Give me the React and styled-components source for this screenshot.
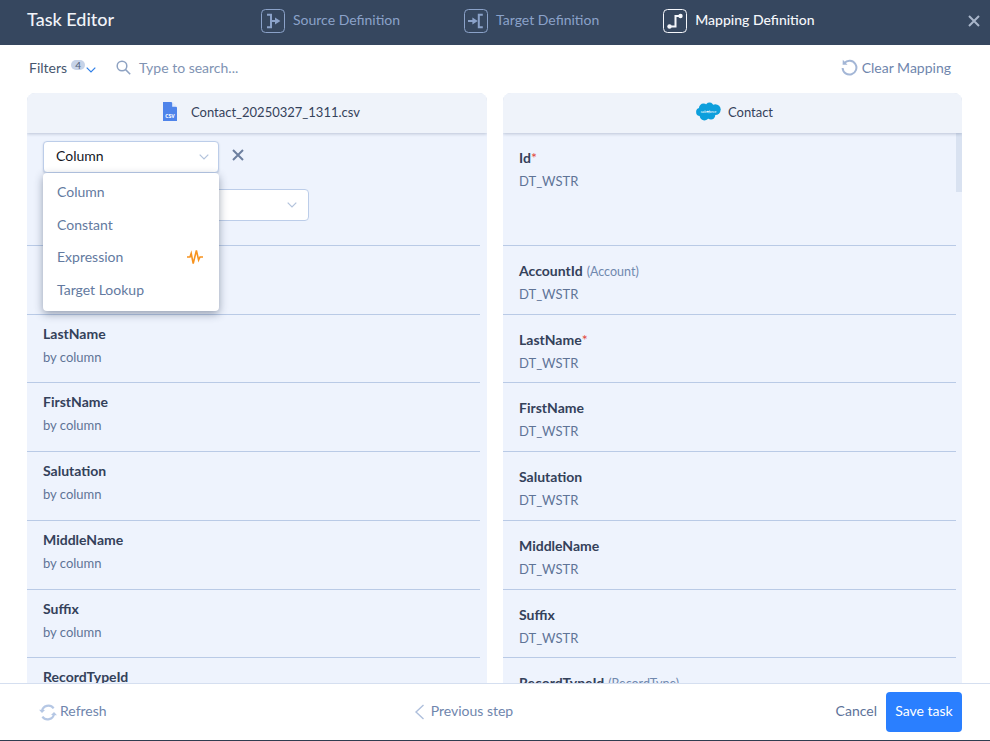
import React from "react";
import styled, { createGlobalStyle } from "styled-components";

// the last row is cut by the footer, so only its name shows
const sourceRows = [
  { name: "LastName", mapped: true },
  { name: "FirstName", mapped: true },
  { name: "Salutation", mapped: true },
  { name: "MiddleName", mapped: true },
  { name: "Suffix", mapped: true },
  { name: "RecordTypeId" },
];

const targetRows = [
  { name: "AccountId", note: "(Account)", type: "DT_WSTR" },
  { name: "LastName", required: true, type: "DT_WSTR" },
  { name: "FirstName", type: "DT_WSTR" },
  { name: "Salutation", type: "DT_WSTR" },
  { name: "MiddleName", type: "DT_WSTR" },
  { name: "Suffix", type: "DT_WSTR" },
  { name: "RecordTypeId", note: "(RecordType)" },
];

const menuItems = ["Column", "Constant", "Expression", "Target Lookup"];

const SourceIcon = () => (
  <svg width="24" height="24" viewBox="0 0 24 24" fill="none" stroke="currentColor">
    <rect x="0.5" y="0.5" width="23" height="23" rx="4" />
    <path d="M6 5.8h4v12.4H6M10 12h5" strokeWidth="2" />
    <path d="M14 8.6l5.4 3.4-5.4 3.4z" fill="currentColor" stroke="none" />
  </svg>
);

const TargetIcon = () => (
  <svg width="24" height="24" viewBox="0 0 24 24" fill="none" stroke="currentColor">
    <rect x="0.5" y="0.5" width="23" height="23" rx="4" />
    <path d="M4 12h5" strokeWidth="2" />
    <path d="M8.4 8.6l5.4 3.4-5.4 3.4z" fill="currentColor" stroke="none" />
    <path d="M18.8 5.8h-4v12.4h4" strokeWidth="2" />
  </svg>
);

const MappingIcon = () => (
  <svg width="24" height="24" viewBox="0 0 24 24" fill="none" stroke="currentColor">
    <rect x="0.5" y="0.5" width="23" height="23" rx="4" />
    <path d="M7 17.5h5.5V7H17" strokeWidth="2" />
    <circle cx="6.5" cy="17.5" r="2.2" fill="currentColor" stroke="none" />
    <circle cx="17.5" cy="7" r="2.2" fill="currentColor" stroke="none" />
  </svg>
);

const Cross = ({ size = 12 }) => (
  <svg width={size} height={size} viewBox="0 0 12 12" fill="none" stroke="currentColor" strokeWidth="2">
    <path d="M1 1l10 10M11 1L1 11" />
  </svg>
);

const Chevron = ({ width = 10, height = 6 }) => (
  <svg width={width} height={height} viewBox="0 0 10 6" fill="none" stroke="currentColor" strokeWidth="1.2">
    <path d="M0.7 0.7L5 5l4.3-4.3" />
  </svg>
);

const SearchIcon = () => (
  <svg width="15" height="15" viewBox="0 0 15 15" fill="none" stroke="#8ea2c2" strokeWidth="1.5">
    <circle cx="6" cy="6" r="4.8" />
    <path d="M9.6 9.6l4.6 4.6" />
  </svg>
);

const ClearIcon = () => (
  <svg width="17" height="17" viewBox="0 0 17 17" fill="none" stroke="#a3b6d6" strokeWidth="2">
    <path d="M3.4 4A6.9 6.9 0 1 1 1.6 9" />
    <path d="M1.8 0.8l-.2 4.9 4.9 .1" fill="#a3b6d6" stroke="none" />
  </svg>
);

const RefreshIcon = () => (
  <svg width="18" height="17" viewBox="0 0 18 17" fill="none" stroke="#b5c7e4" strokeWidth="2.2">
    <path d="M3 7.2A6.4 6.4 0 0 1 14.6 4.4" />
    <path d="M15 9.8A6.4 6.4 0 0 1 3.4 12.6" />
    <path d="M0 5.8l3 3.2 3-3z" fill="#b5c7e4" stroke="none" />
    <path d="M18 11.2l-3-3.2-3 3z" fill="#b5c7e4" stroke="none" />
  </svg>
);

const BackIcon = () => (
  <svg width="11" height="16" viewBox="0 0 11 16" fill="none" stroke="#aebfdc" strokeWidth="1.4">
    <path d="M9.5 1L2 8l7.5 7" />
  </svg>
);

const PulseIcon = () => (
  <svg width="16" height="16" viewBox="0 0 16 16" fill="none" stroke="#f7931e" strokeWidth="1.6">
    <path d="M0 8h3l1.2-3.6L6.2 14.6 9.4 1.4l2.2 9.6L13 8h3" />
  </svg>
);

const CsvIcon = () => (
  <svg width="14" height="19" viewBox="0 0 14 19">
    <path d="M0 0h8.4L14 5.6V19H0z" fill="#4f84ea" />
    <path d="M9.2 0L14 4.8H9.2z" fill="#e4ecfb" />
    <text x="7" y="16.2" textAnchor="middle" fontSize="6.5" fontWeight="700" fontFamily="Lato, sans-serif" fill="#fff">
      csv
    </text>
  </svg>
);

const SalesforceIcon = () => (
  <svg width="25" height="19" viewBox="0 0 25 19">
    <g fill="#0d9fdc">
      <circle cx="7.5" cy="6.2" r="4.6" />
      <circle cx="13.5" cy="5" r="4.4" />
      <circle cx="19.3" cy="7.6" r="5.4" />
      <circle cx="15" cy="13.4" r="4.2" />
      <circle cx="8.4" cy="13.6" r="4.8" />
      <circle cx="4" cy="10" r="3.9" />
    </g>
    <text x="12.5" y="10.6" textAnchor="middle" fontSize="3.8" fontStyle="italic" fontFamily="Lato, sans-serif" fill="#fff">
      salesforce
    </text>
  </svg>
);

const App = () => {
  return (
    <Page>
      <GlobalStyle />
      <Header>
        <Title>Task Editor</Title>
        <Steps>
          <Step>
            <SourceIcon />
            <StepLabel>Source Definition</StepLabel>
          </Step>
          <Step>
            <TargetIcon />
            <StepLabel>Target Definition</StepLabel>
          </Step>
          <Step $active>
            <MappingIcon />
            <StepLabel>Mapping Definition</StepLabel>
          </Step>
        </Steps>
        <CloseButton>
          <Cross />
        </CloseButton>
      </Header>

      <Toolbar>
        <FiltersLabel>Filters</FiltersLabel>
        <Badge>4</Badge>
        <FilterChevron>
          <Chevron />
        </FilterChevron>
        <Search>
          <SearchIcon />
          Type to search...
        </Search>
        <ClearMapping>
          <ClearIcon />
          Clear Mapping
        </ClearMapping>
      </Toolbar>

      <Panels>
        <Panel>
          <PanelHeader $gap={14} $shift={9}>
            <CsvIcon />
            Contact_20250327_1311.csv
          </PanelHeader>
          <RowList $gutter={7}>
            <EditorRow>
              <EditorLine>
                <Select $width={176} $strong>
                  <SelectValue>Column</SelectValue>
                  <Chevron />
                </Select>
                <RemoveButton>
                  <Cross />
                </RemoveButton>
              </EditorLine>
              <Select $width={266}>
                <span />
                <Chevron />
              </Select>
              <Menu>
                {menuItems.map((item) => (
                  <MenuItem key={item}>
                    {item}
                    {item === "Expression" && <PulseIcon />}
                  </MenuItem>
                ))}
              </Menu>
            </EditorRow>
            {/* this row sits behind the open menu */}
            <Row $top={9} />
            {sourceRows.map((row) => (
              <Row key={row.name} $top={9}>
                <Name>{row.name}</Name>
                {row.mapped && <Detail>by column</Detail>}
              </Row>
            ))}
          </RowList>
        </Panel>

        <Panel>
          <PanelHeader $gap={7} $shift={4}>
            <SalesforceIcon />
            Contact
          </PanelHeader>
          <RowList $gutter={6}>
            <FirstRow>
              <Name>
                Id<Star>*</Star>
              </Name>
              <Detail>DT_WSTR</Detail>
            </FirstRow>
            {targetRows.map((row) => (
              <Row key={row.name} $top={15}>
                <Name>
                  {row.name}
                  {row.required && <Star>*</Star>}
                  {row.note && <Note>{row.note}</Note>}
                </Name>
                {row.type && <Detail>{row.type}</Detail>}
              </Row>
            ))}
          </RowList>
          <ScrollThumb />
        </Panel>
      </Panels>

      <Footer>
        <FooterLink>
          <RefreshIcon />
          <FooterText>Refresh</FooterText>
        </FooterLink>
        <PreviousStep>
          <BackIcon />
          <FooterText>Previous step</FooterText>
        </PreviousStep>
        <Cancel>Cancel</Cancel>
        <SaveButton>Save task</SaveButton>
      </Footer>
    </Page>
  );
};

const GlobalStyle = createGlobalStyle`
  html, body {
    margin: 0;
    height: 100%;
    background: #2f3d50;
  }
  * {
    box-sizing: border-box;
  }
`;

const Page = styled.div`
  width: 990px;
  height: 741px;
  display: flex;
  flex-direction: column;
  background: #fff;
  font-family: Lato, sans-serif;
  font-size: 14px;
  overflow: hidden;
  border-bottom: 1px solid #2f3d50;
`;

const Header = styled.div`
  height: 45px;
  flex: none;
  display: flex;
  align-items: center;
  padding: 0 10px 3px 27px;
  background: #36475f;
`;

const Title = styled.div`
  width: 234px;
  padding-bottom: 4px;
  color: #f1f4f9;
  font-size: 18px;
  font-weight: 500;
`;

const Steps = styled.div`
  display: flex;
  gap: 64px;
`;

const Step = styled.div`
  display: flex;
  align-items: center;
  gap: 8px;
  color: ${(p) => (p.$active ? "#f5f7fb" : "#8ba2c9")};
  font-size: 14px;
  font-weight: ${(p) => (p.$active ? 500 : 400)};
`;

const StepLabel = styled.span`
  padding-bottom: 4px;
`;

const CloseButton = styled.div`
  margin-left: auto;
  display: flex;
  color: #a9b6ca;
`;

const Toolbar = styled.div`
  height: 48px;
  flex: none;
  display: flex;
  align-items: center;
  padding: 0 39px 3px 29px;
`;

const FiltersLabel = styled.span`
  color: #47566e;
`;

const Badge = styled.span`
  width: 14px;
  height: 10px;
  margin: 0 0 6px 4px;
  display: flex;
  align-items: center;
  justify-content: center;
  border-radius: 6px;
  background: #c6d3e8;
  color: #4f6079;
  font-size: 10px;
`;

const FilterChevron = styled.span`
  display: flex;
  margin: 4px 0 0 1px;
  color: #2f7fe8;
`;

const Search = styled.div`
  margin-left: 20px;
  display: flex;
  align-items: center;
  gap: 8px;
  color: #8093b3;
`;

const ClearMapping = styled.div`
  margin-left: auto;
  display: flex;
  align-items: center;
  gap: 4px;
  color: #6f86ad;
`;

const Panels = styled.div`
  flex: 1;
  min-height: 0;
  display: grid;
  grid-template-columns: 460px 459px;
  gap: 16px;
  padding-left: 27px;
`;

const Panel = styled.div`
  position: relative;
  display: flex;
  flex-direction: column;
  min-height: 0;
  overflow: hidden;
  border-radius: 8px 8px 0 0;
  background: #eef3fd;
`;

const PanelHeader = styled.div`
  height: 40px;
  flex: none;
  display: flex;
  align-items: center;
  justify-content: center;
  gap: ${(p) => p.$gap}px;
  padding: 0 0 3px ${(p) => p.$shift}px;
  background: #eff3fa;
  box-shadow: 0 1px 3px rgba(70, 90, 130, 0.3);
  color: #35425a;
  font-size: 13px;
  position: relative;
  z-index: 1;
`;

const RowList = styled.div`
  flex: 1;
  min-height: 0;
  margin-right: ${(p) => p.$gutter}px;
  overflow: hidden;
`;

const Row = styled.div`
  height: 68.72px;
  padding: ${(p) => p.$top}px 0 0 16px;
  border-bottom: 1px solid #b9cae6;
`;

const FirstRow = styled.div`
  height: 113px;
  padding: 15px 0 0 16px;
  border-bottom: 1px solid #b9cae6;
`;

const EditorRow = styled(FirstRow)`
  position: relative;
  padding-top: 8px;
`;

const EditorLine = styled.div`
  display: flex;
  align-items: center;
  gap: 13px;
  margin-bottom: 16px;
`;

const Select = styled.div`
  width: ${(p) => p.$width}px;
  height: 32px;
  display: flex;
  align-items: center;
  justify-content: space-between;
  padding: 0 ${(p) => (p.$strong ? 9 : 11)}px 0 12px;
  border: 1px solid #bccde9;
  border-radius: 4px;
  background: #fff;

  ${(p) => p.$strong && "box-shadow: 0 1px 2px rgba(70, 90, 130, 0.25);"}

  svg {
    color: #b3c3dc;
  }
`;

const SelectValue = styled.span`
  padding-bottom: 4px;
  color: #14181f;
`;

const RemoveButton = styled.div`
  display: flex;
  margin-bottom: 5px;
  color: #6d7f9f;
`;

const Menu = styled.div`
  position: absolute;
  top: 40px;
  left: 16px;
  width: 176px;
  height: 138px;
  padding: 2px 0;
  border-radius: 4px;
  background: #fff;
  box-shadow: 0 3px 8px rgba(40, 55, 85, 0.45);
  z-index: 2;
`;

const MenuItem = styled.div`
  height: 32.7px;
  display: flex;
  align-items: center;
  justify-content: space-between;
  padding: 0 16px 0 14px;
  color: #637aa0;
`;

const Name = styled.div`
  height: 20px;
  line-height: 20px;
  color: #34415a;
  font-size: 14px;
  font-weight: 700;
`;

const Star = styled.span`
  color: #e2483d;
  font-weight: 400;
`;

const Note = styled.span`
  margin-left: 4px;
  color: #7088ae;
  font-size: 12.5px;
  font-weight: 400;
`;

const Detail = styled.div`
  margin-top: 3px;
  height: 20px;
  line-height: 20px;
  color: #5f7497;
  font-size: 13px;
`;

const ScrollThumb = styled.div`
  position: absolute;
  top: 40px;
  right: 0;
  width: 6px;
  height: 59px;
  background: #d9e2f1;
`;

const Footer = styled.div`
  height: 57px;
  flex: none;
  display: flex;
  align-items: center;
  padding: 0 28px 0 39px;
  border-top: 1px solid #d5dff0;
  background: #fff;
`;

const FooterLink = styled.div`
  display: flex;
  align-items: center;
  gap: 3px;
  color: #6f86ad;
`;

const FooterText = styled.span`
  padding-bottom: 3px;
`;

const PreviousStep = styled(FooterLink)`
  margin-left: 307px;
  gap: 6px;
`;

const Cancel = styled.div`
  margin-left: auto;
  padding-bottom: 3px;
  color: #5d7299;
`;

const SaveButton = styled.div`
  margin-left: 9px;
  width: 76px;
  height: 40px;
  display: flex;
  align-items: center;
  justify-content: center;
  padding-bottom: 3px;
  border-radius: 4px;
  background: #2a7fff;
  color: #fff;
`;

export default App;
